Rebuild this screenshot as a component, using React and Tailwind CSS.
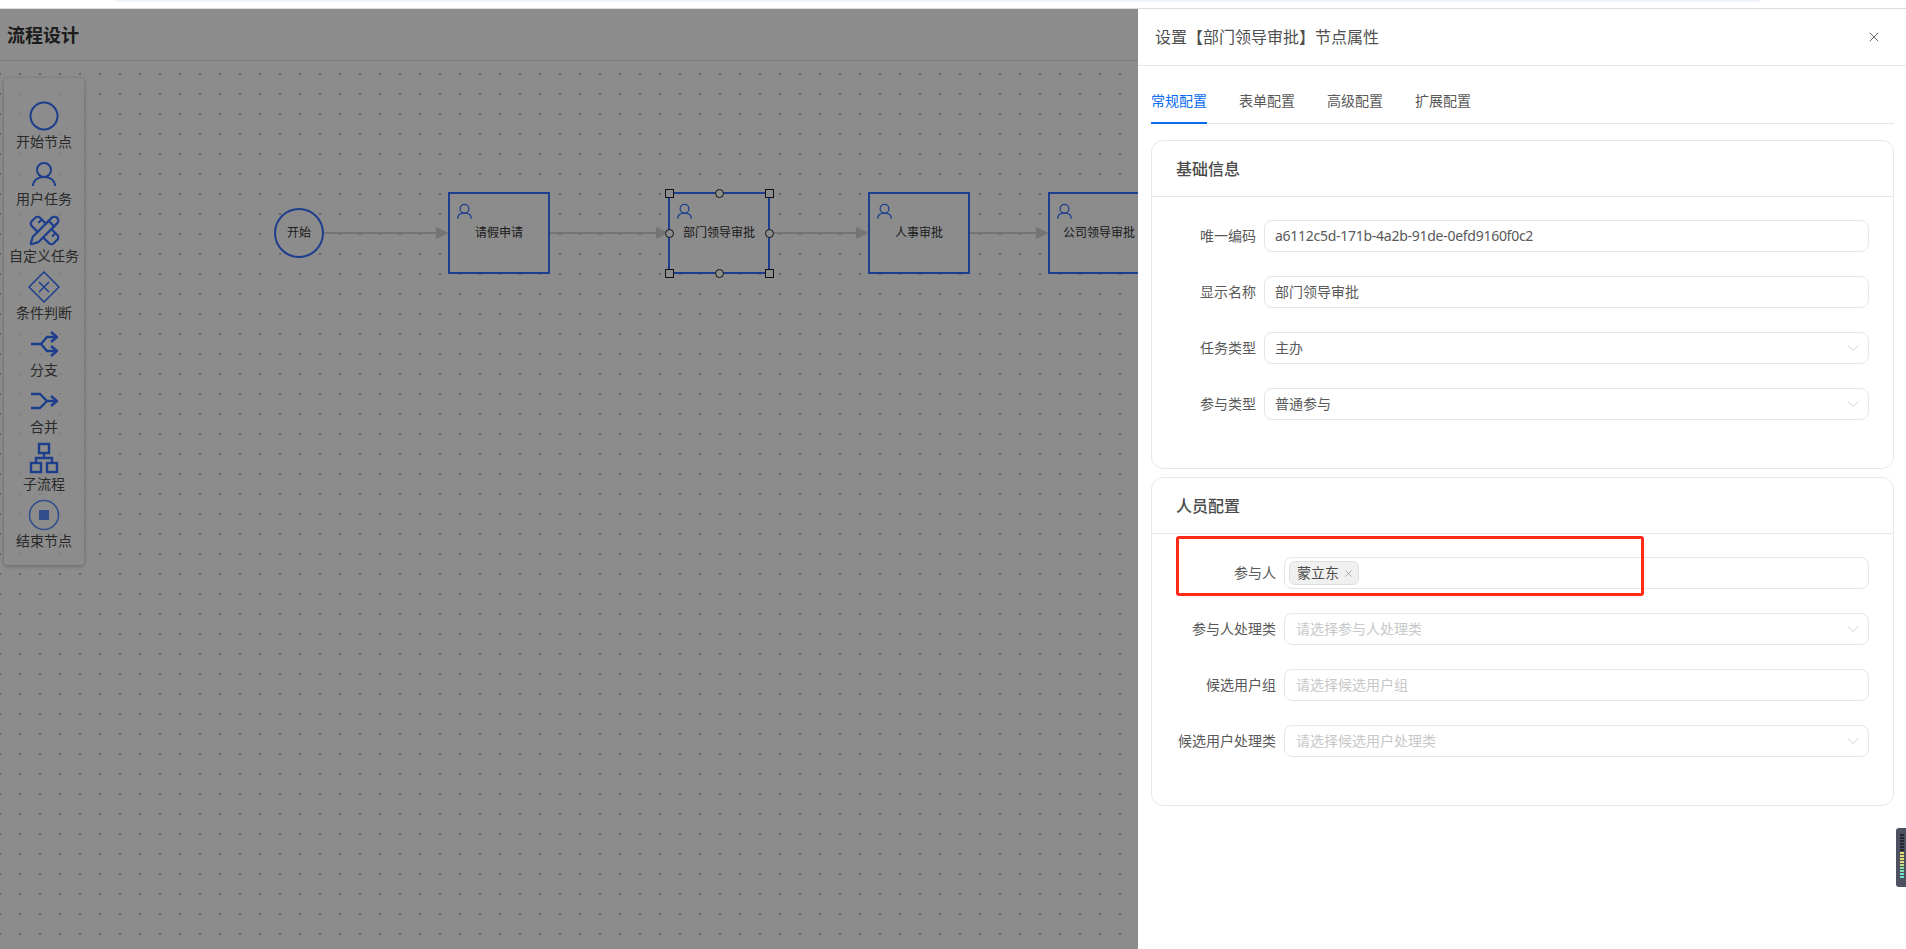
import { ChevronDown, PencilRuler, X } from "lucide-react";

const tabs = ["常规配置", "表单配置", "高级配置", "扩展配置"];

function UserGlyph({ className }) {
	return (
		<svg className={className} viewBox="0 0 24 25" fill="none" stroke="currentColor" strokeWidth="2">
			<circle cx="12" cy="9" r="7" />
			<path d="M1 25c0-6 5-9 11-9s11 3 11 9" />
		</svg>
	);
}

const palette = [
	{
		label: "开始节点",
		icon: (
			<svg className="w-[30px] h-[30px]" viewBox="0 0 30 30" fill="none" stroke="currentColor" strokeWidth="2">
				<circle cx="15" cy="15" r="13.5" />
			</svg>
		)
	},
	{ label: "用户任务", icon: <UserGlyph className="w-[24px] h-[25px]" /> },
	{ label: "自定义任务", icon: <PencilRuler className="w-[33px] h-[33px]" strokeWidth={1.6} /> },
	{
		label: "条件判断",
		icon: (
			<svg className="w-[32px] h-[32px]" viewBox="0 0 32 32" fill="none" stroke="currentColor" strokeWidth="1.5">
				<path d="M16 1l15 15-15 15L1 16z" />
				<path d="M11 11l10 10M21 11L11 21" />
			</svg>
		)
	},
	{
		label: "分支",
		icon: (
			<svg className="w-[28px] h-[26px]" viewBox="0 0 28 26" fill="none" stroke="currentColor" strokeWidth="2.4">
				<path d="M1 13h10l6-7h10M21 1l6 5-6 5M11 13l6 7h10M21 15l6 5-6 5" />
			</svg>
		)
	},
	{
		label: "合并",
		icon: (
			<svg className="w-[28px] h-[18px]" viewBox="0 0 28 18" fill="none" stroke="currentColor" strokeWidth="2.4">
				<path d="M1 2h9l7 7h10M1 16h9l7-7M21 4l6 5-6 5" />
			</svg>
		)
	},
	{
		label: "子流程",
		icon: (
			<svg className="w-[30px] h-[32px]" viewBox="0 0 30 32" fill="none" stroke="currentColor" strokeWidth="2.4">
				<rect x="10" y="2" width="10" height="9" />
				<rect x="2" y="21" width="10" height="9" />
				<rect x="18" y="21" width="10" height="9" />
				<path d="M15 11v5M7 21v-5h16v5" />
			</svg>
		)
	},
	{
		label: "结束节点",
		icon: (
			<svg className="w-[32px] h-[32px] opacity-80" viewBox="0 0 32 32" fill="none" stroke="currentColor" strokeWidth="1.6">
				<circle cx="16" cy="16" r="14.5" />
				<rect x="11" y="11" width="10" height="10" fill="currentColor" stroke="none" />
			</svg>
		)
	}
];

const nodes = [
	{ label: "请假申请", place: "left-[448px]" },
	{ label: "部门领导审批", place: "left-[668px]" },
	{ label: "人事审批", place: "left-[868px]" },
	{ label: "公司领导审批", place: "left-[1048px]" }
];

const handles = [
	"left-[665px] top-[128px]",
	"left-[765px] top-[128px]",
	"left-[665px] top-[208px]",
	"left-[765px] top-[208px]",
	"left-[715px] top-[128px] rounded-full",
	"left-[715px] top-[208px] rounded-full",
	"left-[665px] top-[168px] rounded-full",
	"left-[765px] top-[168px] rounded-full"
];

const meterBars = [
	"bg-[#23262f]", "bg-[#23262f]", "bg-[#23262f]", "bg-[#23262f]", "bg-[#23262f]", "bg-[#23262f]",
	"bg-[#e6dc78]", "bg-[#e6dc78]", "bg-[#e6dc78]", "bg-[#e6dc78]", "bg-[#bfe08c]",
	"bg-[#8fe0a8]", "bg-[#7fe0b8]", "bg-[#70e0c8]", "bg-[#70e0d0]"
];

function Field({ label, labelWidth, children }) {
	return (
		<div className="flex items-center h-[32px] mb-[24px] last:mb-0">
			<div className={`${labelWidth} shrink-0 text-right text-sm text-[#595959] pr-[8px]`}>{label}</div>
			{children}
		</div>
	);
}

function Box({ children, select }) {
	return (
		<div className="flex-1 h-[32px] border border-[#e5e5e5] rounded-[8px] flex items-center pl-[10px] pr-[5px] text-sm text-[#595959] bg-white">
			<div className="flex-1 flex items-center min-w-0">{children}</div>
			{select && <ChevronDown className="w-[20px] h-[20px] text-[#c4c4c4]" strokeWidth={0.9} />}
		</div>
	);
}

function Placeholder({ children }) {
	return <span className="pl-px text-[#c8c8c8]">{children}</span>;
}

function Card({ title, children, extra }) {
	return (
		<div className="relative border border-[#e8e8e8] rounded-[12px] bg-white mb-[8px]">
			<div className="h-[56px] border-b border-[#e8e8e8] flex items-center pl-[24px] text-base font-medium text-[#4a4a4a]">{title}</div>
			<div className="pt-[23px] pb-[48px] pr-[24px]">{children}</div>
			{extra}
		</div>
	);
}

export default function App() {
	return (
		<div className="h-screen overflow-hidden flex flex-col bg-white font-['Noto_Sans','Noto_Sans_CJK_SC',sans-serif]">
			<div className="h-[9px] shrink-0 border-b border-[#dcdcdc] pl-[115px] pr-[146px]">
				<div className="h-[2px] bg-[#eef2fb] rounded-b-md"></div>
			</div>
			<div className="relative flex-1 min-h-0">
				<div className="h-full flex flex-col">
					<div className="h-[52px] shrink-0 border-b border-[#e0e0e0] pl-[7px] flex items-center text-lg font-bold text-[#333]">流程设计</div>
					<div className="relative flex-1 overflow-hidden bg-[radial-gradient(circle,#b8b8b8_1px,transparent_1.2px)] bg-[length:20px_20px] bg-[position:10px_3px]">
						<svg className="absolute left-0 top-0 w-[1200px] h-[300px] text-[#d4d4d4]" viewBox="0 0 1200 300" fill="currentColor">
							<path d="M324 172h113M550 172h107M770 172h87M970 172h67" stroke="currentColor" strokeWidth="2" />
							<path d="M436 166l13 6-13 6zM656 166l13 6-13 6zM856 166l13 6-13 6zM1036 166l13 6-13 6z" />
						</svg>
						<div className="absolute left-[274px] top-[147px] w-[50px] h-[50px] rounded-full border-2 border-[#3672ff] bg-white flex items-center justify-center text-xs text-[#333]">开始</div>
						{nodes.map(node => (
							<div key={node.label} className={`absolute top-[131px] w-[102px] h-[82px] border-2 border-[#3672ff] bg-white flex items-center justify-center text-xs text-[#333] ${node.place}`}>
								<UserGlyph className="absolute left-[7px] top-[9px] w-[15px] h-[16px] text-[#3672ff]" />
								{node.label}
							</div>
						))}
						{handles.map(place => (
							<div key={place} className={`absolute w-[9px] h-[9px] bg-white border border-[#222] ${place}`}></div>
						))}
						<div className="absolute left-[4px] top-[17px] w-[80px] h-[487px] rounded-[4px] bg-white/70 shadow-[0_1px_4px_rgba(0,0,0,0.3)] pt-[21px]">
							{palette.map(item => (
								<div key={item.label} className="h-[57px] flex flex-col items-center">
									<div className="h-[34px] flex items-center justify-center text-[#3672ff]">{item.icon}</div>
									<div className="h-[18px] leading-[18px] text-sm whitespace-nowrap text-[#4d4d4d]">{item.label}</div>
								</div>
							))}
						</div>
					</div>
				</div>
				<div className="absolute inset-0 bg-black/45"></div>
				<div className="absolute right-0 top-0 bottom-0 w-[768px] bg-white flex flex-col">
					<div className="h-[57px] shrink-0 border-b border-[#e8e8e8] pl-[17px] pr-[24px] flex items-center justify-between">
						<span className="text-base text-[#4f4f4f]">设置【部门领导审批】节点属性</span>
						<X className="w-[16px] h-[16px] text-[#666]" strokeWidth={1.5} />
					</div>
					<div className="pl-[13px] pr-[12px]">
						<div className="h-[58px] flex items-end gap-[32px] border-b border-[#e5e5e5] mb-[16px]">
							{tabs.map((tab, i) => (
								<div key={tab} className={i === 0 ? "h-[43px] -mb-px pb-px flex items-center text-sm text-[#0a6cf0] border-b-2 border-[#0a6cf0]" : "h-[42px] pb-[2px] flex items-center text-sm text-[#595959]"}>{tab}</div>
							))}
						</div>
						<Card title="基础信息">
							<Field label="唯一编码" labelWidth="w-[112px]"><Box><span className="tracking-[-0.27px]">a6112c5d-171b-4a2b-91de-0efd9160f0c2</span></Box></Field>
							<Field label="显示名称" labelWidth="w-[112px]"><Box>部门领导审批</Box></Field>
							<Field label="任务类型" labelWidth="w-[112px]"><Box select>主办</Box></Field>
							<Field label="参与类型" labelWidth="w-[112px]"><Box select>普通参与</Box></Field>
						</Card>
						<Card
							title="人员配置"
							extra={<div className="absolute left-[24px] top-[58px] w-[468px] h-[60px] border-[3px] border-[#ff2a1a] rounded-[3px]"></div>}
						>
							<Field label="参与人" labelWidth="w-[132px]">
								<Box>
									<span className="-ml-[6px] h-[24px] w-[70px] border border-[#e0e0e0] bg-[#f0f0f0] rounded-[6px] flex items-center pl-[7px] text-sm text-[#4a4a4a]">
										蒙立东
										<X className="ml-[4px] w-[11px] h-[11px] text-[#8a8a8a]" strokeWidth={1.5} />
									</span>
								</Box>
							</Field>
							<Field label="参与人处理类" labelWidth="w-[132px]"><Box select><Placeholder>请选择参与人处理类</Placeholder></Box></Field>
							<Field label="候选用户组" labelWidth="w-[132px]"><Box><Placeholder>请选择候选用户组</Placeholder></Box></Field>
							<Field label="候选用户处理类" labelWidth="w-[132px]"><Box select><Placeholder>请选择候选用户处理类</Placeholder></Box></Field>
						</Card>
					</div>
					<div className="absolute right-0 top-[819px] w-[10px] h-[59px] bg-[#4d5160] rounded-l-[3px] pt-[6px] pl-[4px] flex flex-col gap-px">
						{meterBars.map((color, i) => (
							<div key={i} className={`w-[4px] h-[2px] ${color}`}></div>
						))}
					</div>
				</div>
			</div>
		</div>
	);
}
